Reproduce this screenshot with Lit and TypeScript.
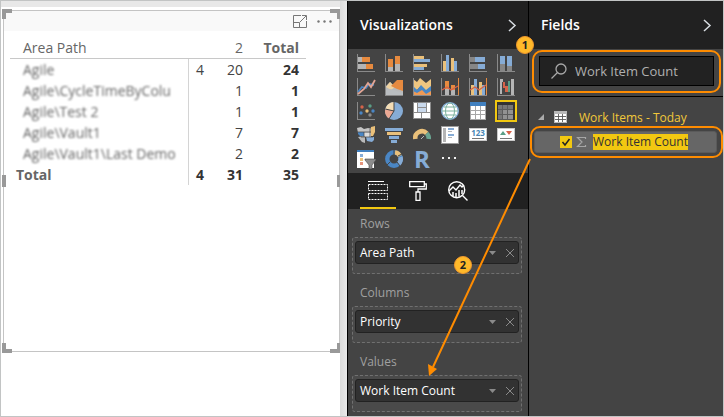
import { LitElement, html, css, svg } from "lit";
import { customElement, property, state } from "lit/decorators.js";
import { classMap } from "lit/directives/class-map.js";

const axis = svg`<path d="M0 0h1v17h17v1H0z" fill="#8a8a8a"/>`;
const ORANGE = "#e68a3f";
const BLUE = "#86acd6";
const SAND = "#eac07a";
const LIGHT = "#b5b5b5";

const bar = (x: number, y: number, w: number, h: number, fill: string) =>
  svg`<rect x=${x} y=${y} width=${w} height=${h} fill=${fill} />`;

const visuals = [
  { name: "Stacked bar chart", art: svg`${bar(1, 3, 4, 5, LIGHT)}${bar(5, 3, 8, 5, ORANGE)}${bar(1, 10, 8, 5, LIGHT)}${bar(9, 10, 7, 5, ORANGE)}${axis}` },
  { name: "Stacked column chart", art: svg`${bar(3, 5, 5, 8, ORANGE)}${bar(3, 13, 5, 4, LIGHT)}${bar(10, 2, 5, 8, ORANGE)}${bar(10, 10, 5, 7, LIGHT)}${axis}` },
  { name: "Clustered bar chart", art: svg`${bar(1, 2, 10, 3, SAND)}${bar(1, 5, 16, 3, BLUE)}${bar(1, 10, 13, 3, SAND)}${bar(1, 13, 10, 3, BLUE)}${axis}` },
  { name: "Clustered column chart", art: svg`${bar(2, 7, 3, 10, SAND)}${bar(5, 1, 3, 16, BLUE)}${bar(10, 4, 3, 13, SAND)}${bar(13, 7, 3, 10, BLUE)}${axis}` },
  { name: "100% stacked bar chart", art: svg`${bar(1, 3, 5, 5, "#868686")}${bar(6, 3, 10, 5, BLUE)}${bar(1, 10, 8, 5, "#868686")}${bar(9, 10, 7, 5, BLUE)}${axis}` },
  { name: "100% stacked column chart", art: svg`${bar(3, 2, 5, 8, BLUE)}${bar(3, 10, 5, 7, "#868686")}${bar(10, 2, 5, 10, BLUE)}${bar(10, 12, 5, 5, "#868686")}${axis}` },
  { name: "Line chart", art: svg`${axis}<path d="M1 14l4-5 4 1 3-4 5 1" fill="none" stroke="#4a86c4" stroke-width="1.8"/><path d="M1 16l6-5 4-6 3 4 4-7" fill="none" stroke="#e3a594" stroke-width="1.8"/>` },
  { name: "Area chart", art: svg`<path d="M1 17V8l4-4 4 4 4-2 5 4v7z" fill="#b9b9b9"/><path d="M1 9l4-5 5 5-4 3z" fill="#f0d3a0"/><path d="M6 8l6-6h6v11l-6-2z" fill="${ORANGE}"/><path d="M1 12c5-2 8 0 17 3v2H1z" fill="#b9bdc0"/>${axis}` },
  { name: "Stacked area chart", art: svg`<path d="M0 1l4 3 3-4 6 5 5-4v8l-5 4-5-5-4 4-4-2z" fill="#efc680"/><path d="M0 8l4 4 4-5 5 5 5-4v6l-5 3-4-3-5 3-4-3z" fill="#4887c6"/><path d="M0 13l4 2 5-3 4 4 5-3v4H0z" fill="#ef9a55"/>${axis}` },
  { name: "Line and stacked column chart", art: svg`${bar(4, 3, 4, 8, ORANGE)}${bar(4, 11, 4, 6, LIGHT)}${bar(10, 7, 4, 5, ORANGE)}${bar(10, 12, 4, 5, LIGHT)}${bar(17, 0, 1, 17, ORANGE)}${axis}<path d="M1 12l5-3 4 3 7-4" fill="none" stroke="#d5634a" stroke-width="1.3"/>` },
  { name: "Line and clustered column chart", art: svg`${bar(2, 7, 3, 10, SAND)}${bar(5, 1, 3, 16, BLUE)}${bar(10, 4, 3, 13, SAND)}${bar(13, 7, 3, 10, BLUE)}${bar(17, 0, 1, 17, ORANGE)}${axis}<path d="M1 12l5-3 4 3 7-5" fill="none" stroke="#d5634a" stroke-width="1.3"/>` },
  { name: "Waterfall chart", art: svg`${bar(3, 4, 2, 12, LIGHT)}${bar(3, 1, 3, 3, LIGHT)}${bar(6, 4, 2, 6, "#d5634a")}${bar(8, 8, 3, 6, "#d5634a")}${bar(11, 3, 2, 11, "#5a9e86")}${bar(14, 1, 3, 16, LIGHT)}${axis}` },
  { name: "Scatter chart", art: svg`${axis}<circle cx="5" cy="5" r="1.7" fill="#d5634a"/><circle cx="13" cy="4" r="1.7" fill="#5a9e86"/><circle cx="4" cy="11" r="1.7" fill="#4a86c4"/><circle cx="10" cy="9" r="1.7" fill="${SAND}"/><circle cx="16" cy="9" r="1.7" fill="#4a86c4"/><circle cx="13" cy="13" r="1.7" fill="#8a8a8a"/>` },
  { name: "Pie chart", art: svg`<circle cx="9" cy="9" r="9" fill="${BLUE}"/><path d="M9 9V0A9 9 0 0 0 .3 7z" fill="#f3dcb4"/><path d="M9 9L.3 7A9 9 0 0 0 4 16.500z" fill="#eba893"/><path d="M9 0v9L.3 7M9 9l-5 8" fill="none" stroke="#444" stroke-width="1"/>` },
  { name: "Treemap", art: svg`<rect width="18" height="17" fill="#8c8c8c"/><path d="M1 1h3v9H1zM14 1h3v9h-3zM1 11h7v5H1zM9 11h8v5H9z" fill="#fff"/><path d="M5 1h8v4H5zM5 6h8v4H5z" fill="#c9d9ec"/>` },
  { name: "Map", art: svg`<circle cx="9" cy="9" r="8.300" fill="#fff" stroke="#86b0d6" stroke-width="1.400"/><ellipse cx="9" cy="9" rx="4.500" ry="8" fill="none" stroke="#7cb29d"/><path d="M1 9h16M3 5h12M3 13h12" stroke="#7cb29d"/>` },
  { name: "Table", art: svg`<rect x="1" width="16" height="18" fill="#a6a6a6"/><rect x="1" width="16" height="4" fill="#4180bf"/><path d="M2 4h4v4H2zM7 4h4v4H7zM12 4h4v4h-4zM2 9h4v3H2zM7 9h4v3H7zM12 9h4v3h-4zM2 13h4v4H2zM7 13h4v4H7zM12 13h4v4h-4z" fill="#fff"/>` },
  { name: "Matrix", selected: true, art: svg`<path d="M1 3h15v15H1z" fill="#5c5c5c"/><path d="M1 3h4v4H1zM6 3h4v4H6zM11 3h5v4h-5zM1 8h4v4H1zM1 13h4v4H1z" fill="#777"/><path d="M6 8h4v4H6zM11 8h5v4h-5zM6 13h4v4H6zM11 13h5v4h-5z" fill="#929292"/>` },
  { name: "Filled map", art: svg`<path d="M0 2l4-1 3 2 4-1 4 1-1 4-6 1-7-1z" fill="#c4c4c4"/><path d="M1 6h6v4H3L1 8z" fill="#4a86c4"/><path d="M14 1l4-1v6l-2 4h-3z" fill="${SAND}"/><path d="M7 7h7v4H7z" fill="#dcdcdc"/><path d="M1 11l7-1v7l-3-1z" fill="#b9b9b9"/><path d="M9 11h8v3l-2 2-5-1z" fill="${BLUE}"/><path d="M0 6h14M7 6v5M4 11h12M13 3v8" stroke="#444" stroke-width=".7" fill="none"/>` },
  { name: "Funnel", art: svg`${bar(0, 2, 18, 3, BLUE)}${bar(2, 6, 14, 3, SAND)}${bar(4, 10, 10, 3, BLUE)}${bar(6, 14, 6, 3, BLUE)}` },
  { name: "Gauge", art: svg`<path d="M2.300 13A6.700 6.700 0 0 1 13.700 7.300" fill="none" stroke="${SAND}" stroke-width="4.600"/><path d="M13.700 7.300A6.700 6.700 0 0 1 15.700 13" fill="none" stroke="#6aa591" stroke-width="4.600"/><path d="M8 13l3-3" stroke="#bbb"/>` },
  { name: "Multi-row card", art: svg`<rect x=".5" y=".5" width="17" height="17" fill="#fff" stroke="#9b9b9b"/>${bar(2, 2, 3, 14, LIGHT)}${bar(7, 2, 6, 2, BLUE)}${bar(7, 5, 4, 1, LIGHT)}${bar(7, 8, 6, 2, BLUE)}${bar(7, 11, 4, 1, LIGHT)}` },
  { name: "Card", art: svg`<rect x=".5" y="2.500" width="17" height="12" fill="#fff" stroke="#c9c9c9"/><text x="9" y="10" text-anchor="middle" font-size="8" font-weight="700" fill="#4a86b4">123</text><path d="M3 12.500h12" stroke="#777"/>` },
  { name: "KPI", art: svg`<rect x=".5" y="2.500" width="17" height="12" fill="#fff" stroke="#c9c9c9"/><path d="M3 9l3-4 3 4z" fill="#5a9e86"/><path d="M9 5h6l-3 4z" fill="#d5634a"/><path d="M3 12.500h12" stroke="#777"/>` },
  { name: "Slicer", art: svg`${bar(0, 0, 17, 18, "#fff")}${bar(0, 0, 17, 2, "#4180bf")}${bar(3, 4, 3, 3, BLUE)}${bar(3, 8, 3, 3, SAND)}${bar(3, 12, 3, 3, "#e6957e")}<path d="M8 9h11v1l-4 5v4h-3v-4L8 10z" fill="#8d8d8d" stroke="#444" stroke-width=".6"/>` },
  { name: "Donut chart", art: svg`<circle cx="9" cy="9" r="6.700" fill="none" stroke="#4a86c4" stroke-width="4.400"/><path d="M10 2.300a6.700 6.700 0 0 1 5 3.700" fill="none" stroke="${SAND}" stroke-width="4.400"/><path d="M15.500 7a6.700 6.700 0 0 1-2 7" fill="none" stroke="${BLUE}" stroke-width="4.400"/><path d="M9 0v5M13 6l4-2M12 12l3 4M5 12l-3 3" stroke="#444"/>` },
  { name: "R script visual", art: svg`<text x="9" y="18" text-anchor="middle" font-size="24" font-weight="700" fill="${BLUE}">R</text>` },
  { name: "More visuals", art: svg`<path d="M1 7h2v2H1zM7 7h2v2H7zM13 7h2v2h-2z" fill="#f2f2f2"/>` },
];

const rows = [
  ["Agile", "4", "20", "24"],
  ["Agile\\CycleTimeByColu", "", "1", "1"],
  ["Agile\\Test 2", "", "1", "1"],
  ["Agile\\Vault1", "", "7", "7"],
  ["Agile\\Vault1\\Last Demo", "", "2", "2"],
];

const chevron = html`<svg width="8" height="13" viewBox="0 0 8 13" aria-hidden="true">
  <path d="M1 1l6 5.500L1 12" fill="none" stroke="#d8dde2" stroke-width="1.500" />
</svg>`;

const resets = css`
  * { box-sizing: border-box; }
  button { font: inherit; color: inherit; background: none; border: 0; padding: 0; margin: 0; display: flex; align-items: center; justify-content: center; }
  svg { display: block; overflow: visible; }
`;

const panelStyles = css`
  .head { height: 48px; padding: 0 12px; background: #212121; display: flex; align-items: center; justify-content: space-between; }
  h2 { margin: 0; font-size: 14px; font-weight: 600; color: #fff; line-height: 20px; }
`;

@customElement("matrix-visual")
export class MatrixVisual extends LitElement {
  static styles = [resets, css`
    :host { display: block; position: relative; height: 342px; border: 1px solid #c4c4c4; color: #444; font-size: 14px; }
    .bar { height: 20px; background: #f9f9f9; display: flex; justify-content: flex-end; align-items: center; gap: 10px; padding-right: 7px; }
    table { border-collapse: separate; border-spacing: 0; margin: 6px 0 0 6px; table-layout: fixed; width: 296px; }
    th, td { height: 21px; padding: 0 7px; line-height: 20px; text-align: right; font-weight: 400; white-space: nowrap; }
    thead th { height: 22px; border-bottom: 1px solid #c8c8c8; color: #666; }
    .path { width: 179px; text-align: left; padding-left: 13px; }
    tbody .path, tfoot .path { border-right: 1px solid #d4d4d4; }
    .c4 { width: 22px; }
    .c2 { width: 39px; }
    .sum, tfoot th, tfoot td { font-weight: 700; color: #333; }
    thead .sum, tfoot .path { color: #666; font-weight: 700; }
    tfoot .path { padding-left: 6px; }
    .private { filter: blur(1px); color: #666; }
    .grip { position: absolute; width: 10px; height: 10px; border: 0 solid #999; }
    .tl { top: -2px; left: -2px; border-width: 4px 0 0 4px; }
    .tr { top: -2px; right: -1px; border-width: 4px 3px 0 0; }
    .bl { bottom: -2px; left: -2px; border-width: 0 0 4px 4px; }
    .br { bottom: -2px; right: -1px; border-width: 0 3px 4px 0; }
    .ml { top: 164px; left: -2px; height: 12px; border-left-width: 4px; }
    .mr { top: 164px; right: -1px; height: 12px; border-right-width: 3px; }
  `];

  render() {
    return html`
      <div class="bar">
        <button aria-label="Focus mode"><svg width="14" height="13" viewBox="0 0 14 13"><path d="M8 .5H.5v12h13V6M.5 7.500h6v5M7 7l6-6M9 .5h4.500V5" fill="none" stroke="#777" /></svg></button>
        <button aria-label="More options"><svg width="15" height="3" viewBox="0 0 15 3"><g fill="#777"><circle cx="1.500" cy="1.500" r="1.200"/><circle cx="7.500" cy="1.500" r="1.200"/><circle cx="13.500" cy="1.500" r="1.200"/></g></svg></button>
      </div>
      <table>
        <thead><tr><th class="path">Area Path</th><th class="c4"></th><th class="c2">2</th><th class="sum">Total</th></tr></thead>
        <tbody>
          ${rows.map((r) => html`<tr><th class="path" scope="row"><div class="private">${r[0]}</div></th><td>${r[1]}</td><td>${r[2]}</td><td class="sum">${r[3]}</td></tr>`)}
        </tbody>
        <tfoot><tr><th class="path" scope="row">Total</th><td>4</td><td>31</td><td>35</td></tr></tfoot>
      </table>
      ${["tl", "tr", "bl", "br", "ml", "mr"].map((g) => html`<span class="grip ${g}"></span>`)}
    `;
  }
}

@customElement("field-well")
export class FieldWell extends LitElement {
  @property() label = "";
  @property() field = "";

  static styles = [resets, css`
    :host { display: block; margin: 0 6px 0 4px; font-size: 12px; }
    .label { padding: 2px 0 0 8px; line-height: 26px; height: 28px; color: #a0a0a0; }
    .well { height: 37px; margin-bottom: 4px; padding: 3px 2px; border: 1px dashed #707070; border-radius: 3px; background: #4a4a4a; }
    .chip { height: 23px; padding: 0 4px; display: flex; align-items: center; gap: 10px; background: #323232; border: 1px solid #222; border-radius: 3px; color: #fff; }
    .name { flex: 1; line-height: 20px; }
  `];

  render() {
    return html`
      <div class="label">${this.label}</div>
      <div class="well"><div class="chip">
        <span class="name">${this.field}</span>
        <button aria-label="${this.field} options"><svg width="7" height="4" viewBox="0 0 7 4"><path d="M0 0h7L3.500 4z" fill="#8a8a8a"/></svg></button>
        <button aria-label="Remove ${this.field}"><svg width="8" height="8" viewBox="0 0 8 8"><path d="M0 0l8 8M8 0L0 8" stroke="#8a8a8a"/></svg></button>
      </div></div>
    `;
  }
}

@customElement("viz-panel")
export class VizPanel extends LitElement {
  static styles = [resets, panelStyles, css`
    :host { display: block; background: #444; }
    .gallery { display: grid; grid-template-columns: repeat(6, 28px); grid-auto-rows: 24px; padding: 2px 4px; height: 124px; }
    .gallery button { width: 28px; height: 24px; }
    .selected svg { outline: 2px solid #f2c811; background: #333; }
    .tabs { display: flex; background: #212121; height: 36px; padding-left: 12px; gap: 4px; }
    .tabs button { width: 36px; border: 0 solid #f2c811; border-width: 2px 0; border-color: transparent; }
    .tabs .active { border-bottom-color: #f2c811; }
  `];

  render() {
    return html`
      <div class="head"><h2>Visualizations</h2><button aria-label="Collapse Visualizations">${chevron}</button></div>
      <div class="gallery">
        ${visuals.map((v) => html`<button class=${classMap({ selected: !!v.selected })} aria-label=${v.name}><svg width="18" height="18" viewBox="0 0 18 18">${v.art}</svg></button>`)}
      </div>
      <div class="tabs">
        <button class="active" aria-label="Fields"><svg width="20" height="20" viewBox="0 0 20 20" fill="none" stroke="#fff"><path d="M0 .5h16"/><path d="M.5 3.500h19v6H.5zM.5 12.500h19v6H.5z" stroke-dasharray="2 1"/></svg></button>
        <button aria-label="Format"><svg width="18" height="20" viewBox="0 0 18 20" fill="none" stroke="#fff" stroke-width="1.300"><path d="M.7.700h14.600v5H.7zM15 3h2.300v5H9v3M7 11h4v8.300H7z"/></svg></button>
        <button aria-label="Analytics"><svg width="20" height="20" viewBox="0 0 20 20" fill="none" stroke="#fff" stroke-width="1.400"><circle cx="8.700" cy="8.700" r="8"/><path d="M14.500 14.500l5 5M1 10l4-4 3 3 4-5 2 2 2-2"/><path d="M5 15v-4M8 16v-4M11 15.500V9M14 13V9" stroke-width="1.500"/></svg></button>
      </div>
      <field-well label="Rows" field="Area Path"></field-well>
      <field-well label="Columns" field="Priority"></field-well>
      <field-well label="Values" field="Work Item Count"></field-well>
    `;
  }
}

@customElement("fields-panel")
export class FieldsPanel extends LitElement {
  @state() private query = "Work Item Count";

  static styles = [resets, panelStyles, css`
    :host { display: block; background: #444; font-size: 12px; }
    .find { position: relative; height: 48px; padding: 7px 9px 0 10px; border-bottom: 1px solid #000; }
    .find::after, .field::after { content: ""; position: absolute; border: 2px solid #ff8c00; pointer-events: none; }
    .find::after { inset: 1px 2px 3px 3px; border-radius: 10px; }
    .box { height: 30px; border: 1px solid #000; background: #222; display: flex; align-items: center; gap: 8px; padding-left: 11px; }
    .box input { flex: 1; min-width: 0; border: 0; padding: 0; outline: 0; background: none; font: inherit; font-size: 13px; color: #b0b0b0; line-height: 20px; }
    .entity { display: flex; align-items: center; height: 20px; margin-top: 10px; padding-left: 9px; color: #f2c83a; }
    .entity .grid { margin: 0 12px 0 10px; }
    .field { position: relative; display: flex; align-items: center; height: 22px; margin: 4px 6px 0 5px; padding-left: 25px; background: #666; border: 1px solid #5a5a5a; border-radius: 3px; }
    .field::after { inset: -6px -7px -6px -5px; border-radius: 10px; }
    .field input { appearance: none; width: 12px; height: 12px; margin: 0 5px 0 0; background: #f2c811 url("data:image/svg+xml,%3Csvg xmlns='http://www.w3.org/2000/svg' viewBox='0 0 12 12'%3E%3Cpath d='M2.500 6l2.500 3 4.500-6' fill='none' stroke='%23222' stroke-width='1.500'/%3E%3C/svg%3E"); }
    label { margin-left: 7px; line-height: 16px; background: #f2c811; color: #333; }
  `];

  render() {
    return html`
      <div class="head"><h2>Fields</h2><button aria-label="Collapse Fields">${chevron}</button></div>
      <div class="find"><div class="box">
        <svg width="16" height="16" viewBox="0 0 16 16" fill="none" stroke="#a8a8a8" stroke-width="1.300"><circle cx="10" cy="6" r="5"/><path d="M6.500 9.500L.5 15.500"/></svg>
        <input type="text" aria-label="Search fields" .value=${this.query} @input=${(e: Event) => (this.query = (e.target as HTMLInputElement).value)} />
      </div></div>
      <div class="entity">
        <svg width="6" height="6" viewBox="0 0 6 6"><path d="M6 0v6H0z" fill="#aaa"/></svg>
        <svg class="grid" width="13" height="12" viewBox="0 0 13 12"><path d="M0 0h13v12H0z" fill="#b8b8b8"/><path d="M1 3h3v2H1zM5 3h3v2H5zM9 3h3v2H9zM1 6h3v2H1zM5 6h3v2H5zM9 6h3v2H9zM1 9h3v2H1zM5 9h3v2H5zM9 9h3v2H9z" fill="#fff"/><path d="M1 5.500h11M1 8.500h11M4.500 3v8M8.500 3v8" stroke="#555" stroke-width=".8"/></svg>
        <span>Work Items - Today</span>
      </div>
      <div class="field">
        <input type="checkbox" id="count" checked />
        <svg width="9" height="10" viewBox="0 0 9 10"><path d="M8.500 2V.500h-8L5 5 .5 9.500h8V8" fill="none" stroke="#a6a6a6" stroke-width="1.200"/></svg>
        <label for="count">Work Item Count</label>
      </div>
    `;
  }
}

@customElement("app-root")
export class AppRoot extends LitElement {
  static styles = [resets, css`
    :host { display: block; font-family: "Open Sans", "Noto Sans", sans-serif; }
    .frame { position: relative; display: flex; min-height: 100vh; border: 1px solid #c2c4c4; background: #fff; overflow: hidden; }
    .canvas { flex: 1; min-width: 0; padding: 6px 7px 0 0; background: linear-gradient(90deg, #dcdcdc, #e9e9e9) right / 7px 100% no-repeat #e8e8e8; }
    .page { height: 100%; background: #fff; padding: 3px 0 0 2px; }
    viz-panel { width: 182px; border: solid #000; border-width: 0 1px; }
    fields-panel { width: 194px; }
    .notes { position: absolute; top: 0; right: 0; width: 376px; height: 415px; pointer-events: none; }
    .badge { position: absolute; width: 18px; height: 18px; border: 1px solid #f0982c; border-radius: 50%; background: #ffb92a; color: #222; font-size: 11px; font-weight: 700; line-height: 16px; text-align: center; }
    .one { top: 35px; right: 189px; }
    .two { top: 255px; right: 251px; }
  `];

  render() {
    return html`
      <div class="frame">
        <main class="canvas"><div class="page"><matrix-visual></matrix-visual></div></main>
        <viz-panel></viz-panel>
        <fields-panel></fields-panel>
        <svg class="notes" viewBox="0 0 376 415" aria-hidden="true">
          <path d="M183 158L86 366" stroke="#ff8c00" stroke-width="2"/>
          <path d="M81 363l9 5-8 7z" fill="#ff8c00"/>
        </svg>
        <span class="badge one">1</span>
        <span class="badge two">2</span>
      </div>
    `;
  }
}
